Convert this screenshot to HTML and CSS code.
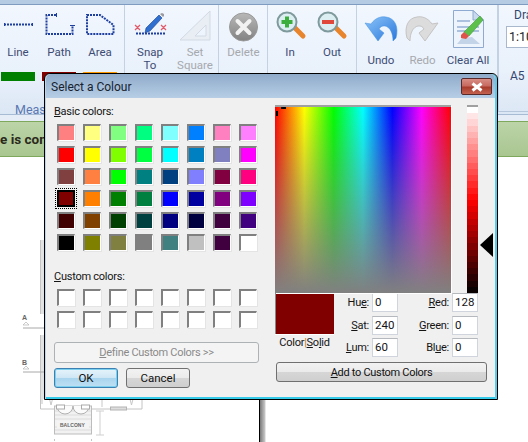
FILE: index.html
```html
<!DOCTYPE html>
<html lang="en">
<head>
<meta charset="utf-8">
<title>Select a Colour</title>
<link rel="stylesheet" href="styles.css">
</head>
<body>
<div class="app">
  <div class="topband"></div>
  <div class="ribbon">
    <section class="group g-measure">
      <div class="tools">
        <div class="tool t36">
          <svg class="ico" width="36" height="36" viewBox="0 8 36 36"><path d="M4 24.500H33" stroke="#1f3f9f" stroke-width="2" stroke-dasharray="2 1" fill="none"/><path d="M4.500 23v3M32.500 23v3" stroke="#1f3f9f"/></svg>
          <span class="lbl">Line</span>
        </div>
        <div class="tool t36">
          <svg class="ico" width="36" height="36" viewBox="41 8 36 36"><path d="M56 15H46.500V34H72.500V25" stroke="#1f3f9f" stroke-width="2" stroke-dasharray="2 1" fill="none"/><path d="M56.500 13v4M70 25.500h5" stroke="#1f3f9f"/></svg>
          <span class="lbl">Path</span>
        </div>
        <div class="tool t36">
          <svg class="ico" width="36" height="36" viewBox="82 8 36 36"><path d="M87 15H100L113.500 25V34H87Z" stroke="#1f3f9f" stroke-width="2" stroke-dasharray="2 1" fill="none"/></svg>
          <span class="lbl">Area</span>
        </div>
      </div>
      <div class="chips"><span class="chip c-green"></span><span class="chip c-red"></span><span class="chip c-orange"></span></div>
      <div class="grouptitle">Meas</div>
    </section>
    <section class="group g-snap">
      <div class="tools">
        <div class="tool t40">
          <svg class="ico" width="40" height="36" viewBox="129 8 40 36"><path d="M135 33.500H165" stroke="#1f3f9f" stroke-width="2" stroke-dasharray="2 1"/><path d="M134 25l5 5M139 25l-5 5M160 25l5 5M165 25l-5 5" stroke="#e05a6a" stroke-width="1.300"/><path d="M158 15l3 3L149 31l-5 2 1-5Z" fill="#2f6fd0" stroke="#1a3f90" stroke-width=".6"/><path d="M159 14l2-1 2 1v2l-1 1Z" fill="#9a9aa0"/></svg>
          <span class="lbl">Snap<br>To</span>
        </div>
        <div class="tool t40 off">
          <svg class="ico" width="40" height="36" viewBox="172 8 40 36"><path d="M177 40L207 11V40ZM192 36H203V25Z" fill="#e9eef5" fill-rule="evenodd" stroke="#d3dae3"/></svg>
          <span class="lbl">Set<br>Square</span>
        </div>
      </div>
    </section>
    <section class="group g-delete">
      <div class="tool t49 off">
        <svg class="ico" width="49" height="36" viewBox="219 8 49 36">
          <defs><linearGradient id="dg" x1="0" y1="0" x2="0" y2="1"><stop offset="0" stop-color="#b8b8b8"/><stop offset="1" stop-color="#828282"/></linearGradient></defs>
          <circle cx="243.500" cy="27" r="14" fill="url(#dg)" stroke="#9a9a9a"/><path d="M237.500 21l12 12M249.500 21l-12 12" stroke="#f2f2f2" stroke-width="4" stroke-linecap="round"/></svg>
        <span class="lbl">Delete</span>
      </div>
    </section>
    <section class="group g-zoom">
      <div class="tool t40">
        <svg class="ico" width="40" height="36" viewBox="271 8 40 36"><path d="M295 27l9 9" stroke="#e8842c" stroke-width="5" stroke-linecap="round"/><circle cx="288" cy="22" r="9.500" fill="#dceef2" stroke="#7f9a9c" stroke-width="2"/><path d="M288 16.500v11M282.500 22h11" stroke="#3cae3c" stroke-width="4"/></svg>
        <span class="lbl">In</span>
      </div>
      <div class="tool t40">
        <svg class="ico" width="40" height="36" viewBox="313 8 40 36"><path d="M336 27l9 9" stroke="#e8842c" stroke-width="5" stroke-linecap="round"/><circle cx="329" cy="22" r="9.500" fill="#dceef2" stroke="#7f9a9c" stroke-width="2"/><path d="M323 22h12" stroke="#e0483c" stroke-width="4"/></svg>
        <span class="lbl">Out</span>
      </div>
    </section>
    <section class="group g-edit">
      <div class="tool tall w-undo">
        <svg class="ico" width="40" height="44" viewBox="362 8 40 44">
          <defs><linearGradient id="ug" x1="0" y1="0" x2="1" y2="1"><stop offset="0" stop-color="#8cc4f8"/><stop offset="1" stop-color="#2a78dc"/></linearGradient></defs>
          <path d="M366 23L372 24C376 18 382 16 387 17C396 18 400 27 397 38L394 41C394 33 391 27 386 26C383 25.500 381 27 380 29L385 33L379 41Z" fill="url(#ug)" stroke="#3f8ee0" stroke-width=".5"/></svg>
        <span class="lbl">Undo</span>
      </div>
      <div class="tool tall w-redo off">
        <svg class="ico" width="41" height="44" viewBox="403 8 41 44"><path d="M439 23L433 24C429 18 423 16 418 17C409 18 405 27 408 38L411 41C411 33 414 27 419 26C422 25.500 424 27 425 29L420 33L426 41Z" fill="#dcdcdc" stroke="#c4c4c4"/></svg>
        <span class="lbl">Redo</span>
      </div>
      <div class="tool tall w-clear">
        <svg class="ico" width="48" height="44" viewBox="445 8 48 44">
          <path d="M454.500 10.500H474L484.500 20V47.500H454.500Z" fill="#eef4fb" stroke="#8eaad0"/>
          <path d="M474 10.500V20H484.500Z" fill="#c9d9ee" stroke="#8eaad0"/>
          <path d="M458 21h13M458 27h22M458 31h22" stroke="#aac0de" stroke-width="2"/>
          <path d="M463 38l10-1 8 7H458Z" fill="#c3d3e8"/>
          <path d="M481 16l3 4-14 16-5-4Z" fill="#5cc04a" stroke="#3e9a34" stroke-width=".6"/>
          <path d="M465 32l5 4-3 3-5-1 0-3Z" fill="#e0524a"/>
        </svg>
        <span class="lbl">Clear All</span>
      </div>
    </section>
    <section class="group g-draw">
      <div class="drawtitle">Dra</div>
      <div class="combo">1:10</div>
      <div class="drawsize">A5</div>
    </section>
  </div>
  <div class="gap"></div>
  <div class="notice">e is com</div>
  <div class="workspace">
    <div class="sheet">
      <svg class="plan" width="260" height="284" viewBox="0 158 260 284">
        <path d="M40.500 241V315M44 241V315M40.500 336V410H142V400M44 336V400" stroke="#c4c4c4" fill="none"/>
        <path d="M42 241V315M42 336V405" stroke="#e2e2e2" stroke-width="2" fill="none"/>
        <path d="M23 329H44M23 373H44" stroke="#a8a8a8"/>
        <path d="M23 326l3-3 3 3ZM23 370l3-3 3 3Z" fill="none" stroke="#b4b4b4" stroke-width=".7"/>
        <text class="plantext" x="22" y="321">A</text>
        <text class="plantext" x="22" y="366">B</text>
        <path d="M49.500 400l1.500 6 1.500-6M130 400l1.500 6 1.500-6M102 400v8" stroke="#c8c8c8" fill="none"/>
        <rect x="54.500" y="407" width="37" height="28" fill="#f2f2f2" stroke="#bcbcbc"/>
        <path d="M55 412H91M55 416H91M55 420H91M55 431H91M55 428H91" stroke="#dcdcdc"/>
        <path d="M57 407a8 8 0 0 0 16 0a8 8 0 0 0 16 0" fill="#fbfbfb" stroke="#b0b0b0"/>
        <rect x="56.500" y="406" width="8" height="4" fill="#fff" stroke="#aaa"/>
        <rect x="81.500" y="406" width="8" height="4" fill="#fff" stroke="#aaa"/>
        <rect x="110.500" y="408" width="16" height="3" fill="#ddd" stroke="#b4b4b4"/>
        <rect x="57" y="422" width="32" height="7" fill="#f4f4f4"/>
        <text class="balcony" x="60" y="428">BALCONY</text>
        <path d="M100 412V436M96 412H104M96 436H104" stroke="#cfcfcf" fill="none"/>
        <path d="M54.500 440v3M91.500 440v3" stroke="#c4c4c4"/>
      </svg>
    </div>
    <div class="edge"></div>
    <div class="rest"></div>
  </div>
</div>

<div class="dialog">
  <header class="titlebar">
    <span class="titletext">Select a Colour</span>
    <span class="close"><svg width="14" height="10" viewBox="0 0 14 10"><path d="M2.500 1.500l9 7M11.500 1.500l-9 7" stroke="#fff" stroke-width="3"/></svg></span>
  </header>
  <div class="body">
    <div class="leftcol">
      <div class="caption"><u>B</u>asic colors:</div>
      <div class="swatches">
        <i class="sw" style="background:#ff8080"></i><i class="sw" style="background:#ffff80"></i><i class="sw" style="background:#80ff80"></i><i class="sw" style="background:#00ff80"></i><i class="sw" style="background:#80ffff"></i><i class="sw" style="background:#0080ff"></i><i class="sw" style="background:#ff80c0"></i><i class="sw" style="background:#ff80ff"></i>
        <i class="sw" style="background:#ff0000"></i><i class="sw" style="background:#ffff00"></i><i class="sw" style="background:#80ff00"></i><i class="sw" style="background:#00ff40"></i><i class="sw" style="background:#00ffff"></i><i class="sw" style="background:#0080c0"></i><i class="sw" style="background:#8080c0"></i><i class="sw" style="background:#ff00ff"></i>
        <i class="sw" style="background:#804040"></i><i class="sw" style="background:#ff8040"></i><i class="sw" style="background:#00ff00"></i><i class="sw" style="background:#008080"></i><i class="sw" style="background:#004080"></i><i class="sw" style="background:#8080ff"></i><i class="sw" style="background:#800040"></i><i class="sw" style="background:#ff0080"></i>
        <i class="sw sel" style="background:#800000"></i><i class="sw" style="background:#ff8000"></i><i class="sw" style="background:#008000"></i><i class="sw" style="background:#008040"></i><i class="sw" style="background:#0000ff"></i><i class="sw" style="background:#0000a0"></i><i class="sw" style="background:#800080"></i><i class="sw" style="background:#8000ff"></i>
        <i class="sw" style="background:#400000"></i><i class="sw" style="background:#804000"></i><i class="sw" style="background:#004000"></i><i class="sw" style="background:#004040"></i><i class="sw" style="background:#000080"></i><i class="sw" style="background:#000040"></i><i class="sw" style="background:#400040"></i><i class="sw" style="background:#400080"></i>
        <i class="sw" style="background:#000000"></i><i class="sw" style="background:#808000"></i><i class="sw" style="background:#808040"></i><i class="sw" style="background:#808080"></i><i class="sw" style="background:#408080"></i><i class="sw" style="background:#c0c0c0"></i><i class="sw" style="background:#400040"></i><i class="sw" style="background:#ffffff"></i>
      </div>
      <div class="caption custom"><u>C</u>ustom colors:</div>
      <div class="swatches">
        <i class="sw"></i><i class="sw"></i><i class="sw"></i><i class="sw"></i><i class="sw"></i><i class="sw"></i><i class="sw"></i><i class="sw"></i>
        <i class="sw"></i><i class="sw"></i><i class="sw"></i><i class="sw"></i><i class="sw"></i><i class="sw"></i><i class="sw"></i><i class="sw"></i>
      </div>
      <div class="btn define"><span><u>D</u>efine Custom Colors &gt;&gt;</span></div>
      <div class="actions">
        <div class="btn ok">OK</div>
        <div class="btn cancel">Cancel</div>
      </div>
    </div>
    <div class="rightcol">
      <div class="picker">
        <div class="matrix"><i class="mark-h"></i><i class="mark-v"></i></div>
        <div class="lum"></div>
        <i class="arrow"></i>
      </div>
      <div class="values">
        <div class="previewcol">
          <div class="preview"></div>
          <div class="cs">Color<span class="bar">|</span><u>S</u>o<u>l</u>id</div>
        </div>
        <div class="fields">
          <label>Hu<u>e</u>:</label><span class="box">0</span><label><u>R</u>ed:</label><span class="box">128</span>
          <label><u>S</u>at:</label><span class="box">240</span><label><u>G</u>reen:</label><span class="box">0</span>
          <label><u>L</u>um:</label><span class="box">60</span><label>Bl<u>u</u>e:</label><span class="box">0</span>
        </div>
      </div>
      <div class="btn add"><span><u>A</u>dd to Custom Colors</span></div>
    </div>
  </div>
</div>
</body>
</html>
```

FILE: styles.css
```css
* { box-sizing: border-box; }
html, body { margin: 0; padding: 0; }
body {
  width: 528px;
  height: 442px;
  overflow: hidden;
  position: relative;
  background: #fff;
  font-family: Roboto, "Noto Sans", sans-serif;
  font-size: 11px;
  letter-spacing: -0.25px;
}
.app { display: flex; flex-direction: column; height: 442px; letter-spacing: 0; }
.topband { height: 5px; background: #b5cbe4; border-bottom: 1px solid #7f9cc0; }
.ribbon {
  display: flex;
  height: 110px;
  background: linear-gradient(#f2f7fe, #e9f1fb 60%, #dce7f5);
  border-bottom: 1px solid #a8bbd4;
}
.group {
  border-right: 1px solid #c3d1e4;
  padding-top: 3px;
  display: flex;
  align-items: flex-start;
  flex: none;
}
.g-measure { width: 125px; display: block; }
.g-snap { width: 94px; padding-left: 5px; gap: 3px; }
.g-delete { width: 49px; }
.g-zoom { width: 89px; padding-left: 2px; gap: 2px; }
.g-edit { width: 141px; padding-left: 4px; gap: 1px; }
.g-draw {
  flex: 1;
  display: block;
  border-right: 0;
  border-left: 1px solid #c3d1e4;
  padding: 0 0 0 7px;
  margin-bottom: 2px;
  border-bottom: 1px solid #b6c7dc;
  color: #34466f;
  font-size: 12px;
  white-space: nowrap;
}
.tools { display: flex; gap: 5px; height: 64px; }
.tool {
  display: flex;
  flex-direction: column;
  align-items: center;
  flex: none;
  color: #3c4c74;
  text-align: center;
}
.t36 { width: 36px; }
.t40 { width: 40px; }
.t49 { width: 49px; }
.w-undo { width: 40px; }
.w-redo { width: 41px; }
.w-clear { width: 48px; }
.ico { display: block; flex: none; }
.lbl { margin-top: 2px; line-height: 13px; font-size: 11.500px; white-space: nowrap; }
.off { color: #a6a9ae; }
.chips { display: flex; gap: 7px; padding-left: 1px; height: 9px; }
.chip { width: 34px; height: 9px; }
.c-green { background: #008000; }
.c-red { background: #800000; }
.c-orange { background: #ff9900; }
.grouptitle { margin-top: 22px; padding-left: 15px; color: #5a78b0; font-size: 12.500px; line-height: 14px; }
.drawtitle { padding-left: 8px; line-height: 14px; margin-top: 3px; }
.combo {
  margin-top: 4px;
  height: 22px;
  border: 1px solid #a9b8cd;
  border-right: 0;
  background: #fff;
  line-height: 20px;
  padding-left: 2px;
  font-size: 12.500px;
  color: #222;
}
.drawsize { margin-top: 21px; padding-left: 4px; line-height: 14px; }
.gap { height: 6px; background: #e6edf6; }
.notice {
  height: 36px;
  background: linear-gradient(#bcd4a8, #a9c690);
  border-top: 1px solid #7ea95c;
  border-bottom: 1px solid #7ea95c;
  font-weight: 700;
  font-size: 13.500px;
  line-height: 34px;
  color: #2a2a1c;
  white-space: nowrap;
  overflow: hidden;
}
.workspace { flex: 1; display: flex; min-height: 0; }
.sheet { width: 260px; background: #fff; position: relative; border-right: 1px solid #000; }
.plan { position: absolute; left: 0; top: 0; display: block; }
.plantext { font: 700 7px "Liberation Sans", sans-serif; fill: #666; }
.balcony { font: 700 5px "Liberation Sans", sans-serif; fill: #666; }
.edge { width: 5px; background: linear-gradient(to right, #7a7a7a, #c8c8c8); }
.rest { flex: 1; background: #fff; border-left: 1px solid #e6e6e6; }

.dialog {
  position: absolute;
  left: 44px;
  top: 73px;
  width: 454px;
  height: 327px;
  background: #f0f0f0;
  border: 1px solid #000;
  border-radius: 6px 6px 0 0;
  box-shadow: inset 1px 0 0 #bcd6ee, inset -2px 0 0 #5ccbea, inset 0 -2px 0 #35cbe8;
  color: #141414;
  overflow: hidden;
}
.titlebar {
  height: 24px;
  margin: 0 2px 0 1px;
  background: linear-gradient(#8fabca, #b7cee6);
  display: flex;
  align-items: center;
  justify-content: space-between;
  padding: 2px 3px 0 5px;
  border-radius: 5px 5px 0 0;
}
.titletext { font-size: 12px; letter-spacing: 0; color: #17222e; }
.close {
  width: 31px;
  height: 17px;
  border: 1px solid #5a2a2a;
  border-radius: 2px;
  background: linear-gradient(#d88d84, #c76a60 45%, #a83c2c 55%, #c3614f);
  display: flex;
  align-items: center;
  justify-content: center;
  margin-top: -1px;
}
.close svg { display: block; }
.body { display: flex; gap: 16px; padding-left: 9px; }
.leftcol { width: 205px; flex: none; }
.caption { line-height: 14px; height: 14px; margin-top: 7px; white-space: nowrap; }
.custom { margin-top: 19px; }
.swatches {
  display: grid;
  grid-template-columns: repeat(8, 18px);
  grid-auto-rows: 17px;
  gap: 5px 8px;
  padding-left: 3px;
  margin-top: 5px;
}
.sw {
  display: block;
  background: #fff;
  border-top: 2px solid #808080;
  border-left: 2px solid #808080;
  border-right: 1px solid #fff;
  border-bottom: 1px solid #fff;
  box-shadow: 1px 1px 0 #e4e4e4;
}
.sel {
  border: 2px solid #000;
  box-shadow: none;
  outline: 1px dotted #000;
  outline-offset: 1px;
}
.btn {
  display: flex;
  align-items: center;
  justify-content: center;
  border: 1px solid #707070;
  border-radius: 3px;
  background: linear-gradient(#f2f2f2, #ebebeb 48%, #d6d6d6 52%, #cfcfcf);
  font-size: 11px;
  letter-spacing: -0.3px;
  color: #111;
}
.define {
  height: 21px;
  margin-top: 14px;
  border-color: #adb2b5;
  background: #f4f4f4;
  color: #8a8a8a;
}
.actions { display: flex; gap: 8px; margin-top: 5px; }
.ok, .cancel { width: 64px; height: 20px; font-size: 11.500px; letter-spacing: 0; }
.ok {
  border-color: #3c7fb1;
  background: linear-gradient(#e6f4fb, #cfe7f5 48%, #a9d5ee 52%, #bfe0f3);
  box-shadow: inset 0 0 0 1px #7bd0ef;
}
.rightcol { width: 212px; flex: none; }
.picker { position: relative; display: flex; padding-top: 7px; height: 195px; }
.matrix {
  position: relative;
  width: 176px;
  height: 188px;
  border-top: 2px solid #a0a0a0;
  box-shadow: 1px 1px 0 #fff;
  background:
    linear-gradient(to bottom, rgba(128,128,128,0), #808080),
    linear-gradient(to right, #f00, #ff0, #0f0, #0ff, #00f, #f0f, #f00);
}
.mark-h { position: absolute; left: 6px; top: 0; width: 5px; height: 2px; background: #000; }
.mark-v { position: absolute; left: 1px; top: 4px; width: 2px; height: 5px; background: #000; }
.lum {
  width: 11px;
  height: 188px;
  margin-left: 16px;
  border-top: 2px solid #a0a0a0;
  background: linear-gradient(to bottom,
    hsl(0,100%,100%) 0 3.33%, hsl(0,100%,95%) 0 6.67%, hsl(0,100%,91.7%) 0 10%, hsl(0,100%,88.3%) 0 13.33%,
    hsl(0,100%,85%) 0 16.67%, hsl(0,100%,81.7%) 0 20%, hsl(0,100%,78.3%) 0 23.33%, hsl(0,100%,75%) 0 26.67%,
    hsl(0,100%,71.7%) 0 30%, hsl(0,100%,68.3%) 0 33.33%, hsl(0,100%,65%) 0 36.67%, hsl(0,100%,61.7%) 0 40%,
    hsl(0,100%,58.3%) 0 43.33%, hsl(0,100%,55%) 0 46.67%, hsl(0,100%,51.7%) 0 50%, hsl(0,100%,48.3%) 0 53.33%,
    hsl(0,100%,45%) 0 56.67%, hsl(0,100%,41.7%) 0 60%, hsl(0,100%,38.3%) 0 63.33%, hsl(0,100%,35%) 0 66.67%,
    hsl(0,100%,31.7%) 0 70%, hsl(0,100%,28.3%) 0 73.33%, hsl(0,100%,25%) 0 76.67%, hsl(0,100%,21.7%) 0 80%,
    hsl(0,100%,18.3%) 0 83.33%, hsl(0,100%,15%) 0 86.67%, hsl(0,100%,11.7%) 0 90%, hsl(0,100%,8.3%) 0 93.33%,
    hsl(0,100%,5%) 0 96.67%, hsl(0,100%,1.7%) 0 100%);
}
.arrow {
  position: absolute;
  left: 205px;
  top: 135px;
  width: 0;
  height: 0;
  border-top: 12.500px solid transparent;
  border-bottom: 12.500px solid transparent;
  border-right: 13px solid #000;
}
.values { display: flex; height: 69px; }
.previewcol { width: 59px; flex: none; }
.preview { height: 41px; background: #800000; border-top: 1px solid #888; border-left: 1px solid #888; box-shadow: 0 1px 0 #fff; }
.cs { line-height: 14px; margin-top: 2px; text-align: center; white-space: nowrap; }
.bar { color: #c77a20; }
.fields {
  display: grid;
  grid-template-columns: 35px 26px 48px 26px;
  grid-auto-rows: 19px;
  gap: 3.500px 3px;
  align-items: center;
}
.fields label { text-align: right; white-space: nowrap; }
.box {
  height: 19px;
  background: #fff;
  border: 1px solid #d0d4dc;
  border-top-color: #b5b8bd;
  line-height: 16px;
  padding-left: 2px;
  font-size: 11.500px;
  letter-spacing: 0;
}
.add { height: 20px; margin-left: 1px; margin-top: 0; width: 211px; }
```
